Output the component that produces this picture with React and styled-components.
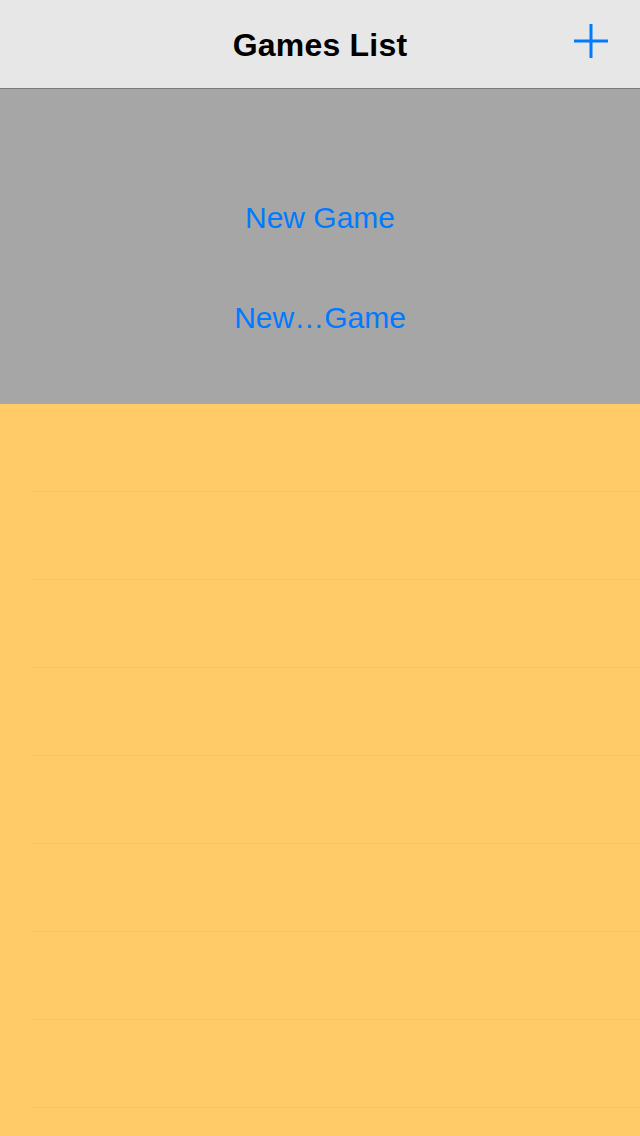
import React from 'react'
import styled, { createGlobalStyle } from 'styled-components';

const GlobalStyle = createGlobalStyle`
  html, body {
    margin: 0;
    padding: 0;
    background: #ffcb69;
  }
  body {
    font-family: "Liberation Sans", Arial, sans-serif;
  }
`;

const rows = Array.from({ length: 9 }, (_, i) => i);

const App = () => {
  return (
    <Screen>
      <GlobalStyle />
      <NavBar>
        <span />
        <Title>Games List</Title>
        <AddButton aria-label='Add'>
          <svg width='36' height='36' viewBox='0 0 36 36'>
            <path d='M18 1 V35 M1 18 H35' stroke='#007aff' strokeWidth='3' fill='none' />
          </svg>
        </AddButton>
      </NavBar>

      <Panel>
        <LinkButton>New Game</LinkButton>
        <LinkButton>New…Game</LinkButton>
      </Panel>

      <List>
        {rows.map((r) => (
          <Row key={r}>
            <RowBody />
          </Row>
        ))}
      </List>
    </Screen>
  )
}

export default App

const Screen = styled.div`
  width: 640px;
  height: 1136px;
  overflow: hidden;
  display: flex;
  flex-direction: column;
`;

const NavBar = styled.header`
  height: 88px;
  flex-shrink: 0;
  background-color: #e7e7e7;
  border-bottom: 1px solid #7b7b7b;
  display: grid;
  grid-template-columns: 1fr auto 1fr;
  align-items: center;
`;

const Title = styled.h1`
  margin: 0;
  padding-top: 2px;
  font-size: 32px;
  font-weight: bold;
  color: #000;
  letter-spacing: 0.2px;
`;

const AddButton = styled.button`
  justify-self: end;
  align-self: start;
  margin-right: 31px;
  margin-top: 23px;
  padding: 0;
  border: none;
  background: none;
  width: 36px;
  height: 36px;
  cursor: pointer;

  svg {
    display: block;
  }
`;

const Panel = styled.section`
  height: 315px;
  flex-shrink: 0;
  box-sizing: border-box;
  padding-top: 111px;
  background-color: #a6a6a6;
  display: flex;
  flex-direction: column;
  align-items: center;
  gap: 64px;
`;

const LinkButton = styled.button`
  padding: 0;
  border: none;
  background: none;
  font-family: "Liberation Sans", Arial, sans-serif;
  font-size: 30px;
  line-height: 36px;
  height: 36px;
  color: #007aff;
  cursor: pointer;
`;

const List = styled.div`
  flex-shrink: 0;
  display: flex;
  flex-direction: column;
  background-color: #ffcb69;
`;

const Row = styled.div`
  flex-shrink: 0;
  padding-left: 30px;
`;

const RowBody = styled.div`
  height: 87px;
  border-bottom: 1px solid #e3c78f;
`;
